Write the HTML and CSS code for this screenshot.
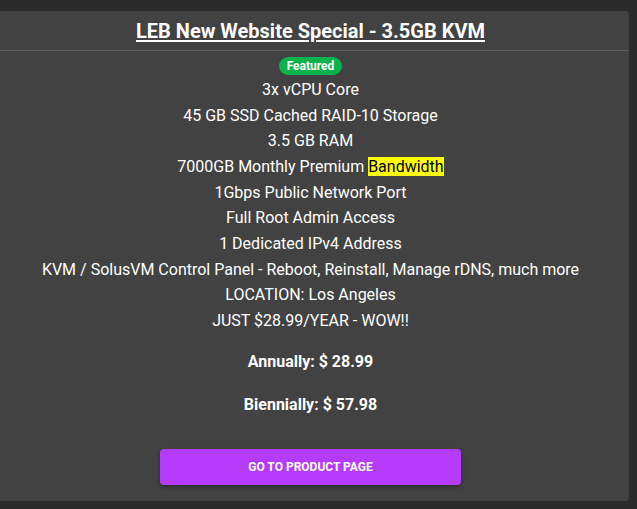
FILE: index.html
```html
<!DOCTYPE html>
<html>
<head>
<meta charset="utf-8">
<link rel="stylesheet" href="styles.css">
</head>
<body>
<div class="card">
  <div class="card-header">
    <a class="title" href="#">LEB New Website Special - 3.5GB KVM</a>
  </div>
  <div class="card-body">
    <span class="badge">Featured</span>
    <ul class="features">
      <li>3x vCPU Core</li>
      <li>45 GB SSD Cached RAID-10 Storage</li>
      <li>3.5 GB RAM</li>
      <li>7000GB Monthly Premium <mark class="hl">Bandwidth</mark></li>
      <li>1Gbps Public Network Port</li>
      <li>Full Root Admin Access</li>
      <li>1 Dedicated IPv4 Address</li>
      <li>KVM / SolusVM Control Panel - Reboot, Reinstall, Manage rDNS, much more</li>
      <li>LOCATION: Los Angeles</li>
      <li>JUST $28.99/YEAR - WOW!!</li>
    </ul>
    <p class="price">Annually: $ 28.99</p>
    <p class="price">Biennially: $ 57.98</p>
    <a class="btn" href="#">GO TO PRODUCT PAGE</a>
  </div>
</div>
</body>
</html>
```
FILE: styles.css
```css
html, body {
  margin: 0;
  padding: 0;
  background: #2b2b2b;
  font-family: Roboto, "Liberation Sans", sans-serif;
  color: #ffffff;
}
body {
  padding-top: 11px;
  overflow: hidden;
}
.card {
  margin-left: -8px;
  width: 637px;
  height: 490px;
  background: #424242;
  border-radius: 0 4px 4px 0;
  box-sizing: border-box;
}
.card-header {
  height: 40px;
  border-bottom: 1px solid #5c5c5c;
  display: flex;
  align-items: center;
  justify-content: center;
  box-sizing: border-box;
}
.title {
  color: #ffffff;
  font-weight: 700;
  font-size: 20px;
  text-decoration: underline;
  text-underline-offset: 2px;
  text-decoration-thickness: 2px;
}
.card-body {
  display: flex;
  flex-direction: column;
  align-items: center;
  padding-top: 6px;
}
.badge {
  background: #0ab34b;
  color: #fff;
  font-size: 12px;
  font-weight: 700;
  line-height: 18px;
  padding: 0 8px;
  border-radius: 10px;
}
.features {
  list-style: none;
  margin: 2px 0 0;
  padding: 0;
  text-align: center;
  font-size: 16px;
  line-height: 25.65px;
}
.hl {
  background: #ffff00;
  color: #000;
}
.price {
  margin: 16px 0 0;
  font-weight: 700;
  font-size: 16px;
  line-height: 24px;
}
.price + .price {
  margin-top: 19px;
}
.btn {
  margin-top: 32px;
  width: 301px;
  height: 36px;
  background: #b53cff;
  color: #fff;
  border-radius: 4px;
  display: flex;
  align-items: center;
  justify-content: center;
  font-size: 12px;
  font-weight: 700;
  text-decoration: none;
  box-shadow: 0 2px 4px rgba(0,0,0,0.35);
}
```
